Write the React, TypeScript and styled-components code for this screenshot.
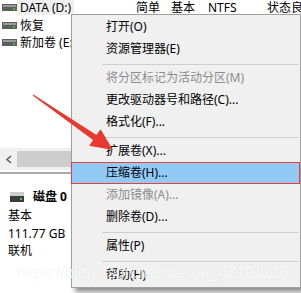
import React from "react";
import styled, { createGlobalStyle } from "styled-components";

const GlobalStyle = createGlobalStyle`
  html, body { margin: 0; padding: 0; background: #fff; }
  body { font-family: "Noto Sans", "Noto Sans CJK SC", sans-serif; }
`;

const Screen = styled.div`
  position: relative;
  width: 301px;
  height: 293px;
  overflow: hidden;
  background: #fff;
  font-family: "Noto Sans", "Noto Sans CJK SC", sans-serif;
  font-size: 12px;
  color: #000;
  display: flex;
  flex-direction: column;
`;

const VolumeList = styled.div`
  display: flex;
  flex-direction: column;
  height: 148px;
`;

const VolumeRow = styled.div`
  display: grid;
  grid-template-columns: 136px 35px 37px 59px 1fr;
  height: 17.5px;
  align-items: start;
  white-space: nowrap;
  overflow: hidden;
`;

const NameCell = styled.div`
  display: flex;
  align-items: center;
  padding-left: 2px;
  height: 15px;
`;

const NameLabel = styled.span<{ $selected?: boolean }>`
  padding: 0 3px;
  height: 15px;
  line-height: 16px;
  background: ${(p) => (p.$selected ? "#efefef" : "transparent")};
`;

const Cell = styled.span`
  line-height: 16px;
  overflow: hidden;
`;

const HScrollbar = styled.div`
  display: flex;
  align-items: center;
  height: 22px;
  background: #f0f0f0;
`;

const ScrollArrow = styled.div`
  width: 17px;
  height: 15px;
  display: flex;
  align-items: center;
  justify-content: center;
`;

const ScrollThumb = styled.div`
  width: 200px;
  height: 16px;
  background: #cdcdcd;
`;

const PaneSplitter = styled.div`
  margin-top: 2px;
  height: 2px;
  background: #a9a9a9;
`;

const DiskSection = styled.div`
  display: flex;
  flex-direction: column;
  padding-top: 14px;
`;

const DiskHeader = styled.div`
  display: flex;
  align-items: center;
  gap: 9px;
  padding-left: 10px;
  height: 18px;
`;

const DiskTitle = styled.span`
  font-weight: 700;
  line-height: 18px;
`;

const DiskInfo = styled.div`
  display: flex;
  flex-direction: column;
  padding-left: 8px;
  margin-top: 1px;
`;

const InfoLine = styled.span`
  height: 17.5px;
  line-height: 17.5px;
`;

const ContextMenu = styled.div`
  position: absolute;
  left: 71px;
  top: 14px;
  width: 230px;
  box-sizing: border-box;
  background: #f0f0f0;
  border: 1px solid #a0a0a0;
  box-shadow: 4px 4px 5px rgba(0, 0, 0, 0.45);
  padding: 1px 0;
  display: flex;
  flex-direction: column;
`;

const MenuItem = styled.div<{ $disabled?: boolean; $active?: boolean }>`
  position: relative;
  height: 22px;
  line-height: 22px;
  padding-left: 34px;
  white-space: nowrap;
  color: ${(p) => (p.$disabled ? "#8d8d8d" : "#000")};
  background: ${(p) => (p.$active ? "#91c9f7" : "transparent")};

  ${(p) =>
    p.$active &&
    `
    &::after {
      content: "";
      position: absolute;
      left: -1px;
      right: 0;
      top: 0;
      bottom: 0;
      border: 1.5px solid #e8413c;
    }
  `}
`;

const MenuSeparator = styled.div`
  height: 1px;
  margin: 4px 2px 2px 30px;
  background: #cfcfcf;
`;

const Overlay = styled.svg`
  position: absolute;
  left: 0;
  top: 0;
  pointer-events: none;
`;

const Watermark = styled.div`
  position: absolute;
  left: 17px;
  top: 265px;
  font-family: "Liberation Sans", Arial, sans-serif;
  font-size: 16px;
  line-height: 16px;
  color: rgba(255, 255, 255, 0.8);
  text-shadow: 0 0 1px rgba(0, 0, 0, 0.08);
  white-space: nowrap;
  pointer-events: none;
`;

const DriveGlyph = () => (
  <svg width="15" height="7" viewBox="0 0 15 7">
    <rect x="0" y="0" width="15" height="7" fill="#5e5e5e" />
    <rect x="1" y="1" width="13" height="2" fill="#9a9a9a" />
    <rect x="11" y="4" width="2" height="2" fill="#3ec23e" />
  </svg>
);

const DiskGlyph = () => (
  <svg width="14" height="10" viewBox="0 0 14 10">
    <rect x="0" y="0" width="14" height="5" fill="#cfcfcf" />
    <rect x="0" y="4" width="14" height="6" fill="#3b3b3b" />
    <rect x="10" y="6" width="2" height="2" fill="#4cd04c" />
  </svg>
);

const volumes = [
  { name: "DATA (D:)", selected: true, cols: ["简单", "基本", "NTFS", "状态良好"] },
  { name: "恢复", selected: false, cols: ["简单", "基本", "NTFS", "状态良好"] },
  { name: "新加卷 (E:)", selected: false, cols: ["简单", "基本", "NTFS", "状态良好"] },
];

type Entry =
  | { kind: "item"; label: string; disabled?: boolean; active?: boolean }
  | { kind: "sep" };

const menu: Entry[] = [
  { kind: "item", label: "打开(O)" },
  { kind: "item", label: "资源管理器(E)" },
  { kind: "sep" },
  { kind: "item", label: "将分区标记为活动分区(M)", disabled: true },
  { kind: "item", label: "更改驱动器号和路径(C)..." },
  { kind: "item", label: "格式化(F)..." },
  { kind: "sep" },
  { kind: "item", label: "扩展卷(X)..." },
  { kind: "item", label: "压缩卷(H)...", active: true },
  { kind: "item", label: "添加镜像(A)...", disabled: true },
  { kind: "item", label: "删除卷(D)..." },
  { kind: "sep" },
  { kind: "item", label: "属性(P)" },
  { kind: "sep" },
  { kind: "item", label: "帮助(H)" },
];

export default function App() {
  return (
    <>
      <GlobalStyle />
      <Screen>
        <VolumeList>
          {volumes.map((v) => (
            <VolumeRow key={v.name}>
              <NameCell>
                <DriveGlyph />
                <NameLabel $selected={v.selected}>{v.name}</NameLabel>
              </NameCell>
              {v.cols.map((c, i) => (
                <Cell key={i}>{c}</Cell>
              ))}
            </VolumeRow>
          ))}
        </VolumeList>
        <HScrollbar>
          <ScrollArrow>
            <svg width="8" height="9" viewBox="0 0 8 9">
              <path d="M6 1 L2 4.5 L6 8" fill="none" stroke="#606060" strokeWidth="1.6" />
            </svg>
          </ScrollArrow>
          <ScrollThumb />
        </HScrollbar>
        <PaneSplitter />
        <DiskSection>
          <DiskHeader>
            <DiskGlyph />
            <DiskTitle>磁盘 0</DiskTitle>
          </DiskHeader>
          <DiskInfo>
            <InfoLine>基本</InfoLine>
            <InfoLine>111.77 GB</InfoLine>
            <InfoLine>联机</InfoLine>
          </DiskInfo>
        </DiskSection>

        <ContextMenu>
          {menu.map((e, i) =>
            e.kind === "sep" ? (
              <MenuSeparator key={i} />
            ) : (
              <MenuItem key={i} $disabled={e.disabled} $active={e.active}>
                {e.label}
              </MenuItem>
            )
          )}
        </ContextMenu>

        <Watermark>https://blog.csdn.net/weixin_43191108</Watermark>

        <Overlay width="301" height="293" viewBox="0 0 301 293">
          <polygon
            points="32.7,95.4 93.1,140 89.1,145.8 113,150 100.5,129.3 96.5,135 33.3,94.6"
            fill="#e8392f"
          />
        </Overlay>
      </Screen>
    </>
  );
}
